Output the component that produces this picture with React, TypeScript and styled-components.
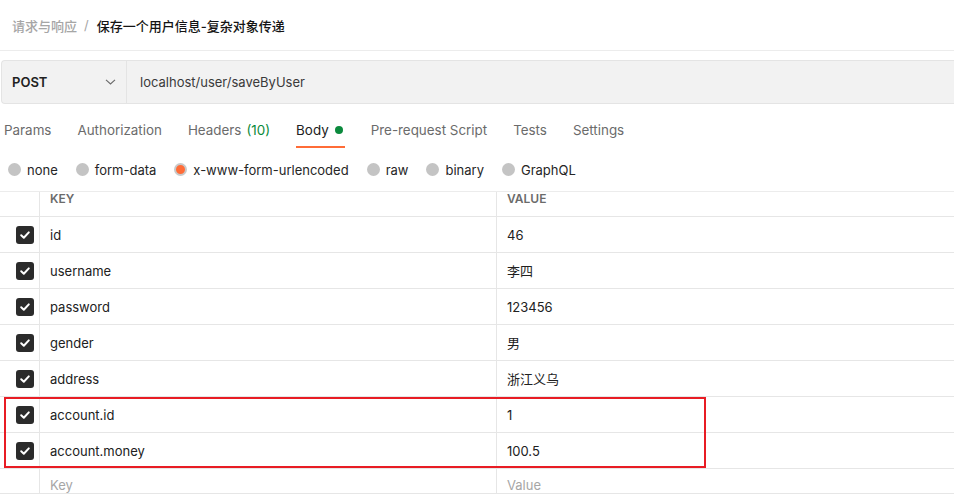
import styled, { createGlobalStyle } from 'styled-components';

type Param = {
  key: string;
  value: string;
  marked?: boolean;
};

const params: Param[] = [
  { key: 'id', value: '46' },
  { key: 'username', value: '李四' },
  { key: 'password', value: '123456' },
  { key: 'gender', value: '男' },
  { key: 'address', value: '浙江义乌' },
  { key: 'account.id', value: '1', marked: true },
  { key: 'account.money', value: '100.5', marked: true },
];

const tabs = [
  { label: 'Params' },
  { label: 'Authorization' },
  { label: 'Headers', count: '(10)' },
  { label: 'Body', active: true, dot: true },
  { label: 'Pre-request Script' },
  { label: 'Tests' },
  { label: 'Settings' },
];

const bodyTypes = ['none', 'form-data', 'x-www-form-urlencoded', 'raw', 'binary', 'GraphQL'];

function CheckIcon() {
  return (
    <svg width="12" height="12" viewBox="0 0 12 12" fill="none">
      <path d="M2.2 6.3 L4.8 8.8 L9.8 3.4" stroke="#fff" strokeWidth="2" strokeLinecap="round" strokeLinejoin="round" />
    </svg>
  );
}

function App() {
  const plain = params.filter((p) => !p.marked);
  const marked = params.filter((p) => p.marked);

  return (
    <Page>
      <GlobalStyle />
      <Breadcrumb>
        <Crumb>请求与响应</Crumb>
        <Slash>/</Slash>
        <Current>保存一个用户信息-复杂对象传递</Current>
      </Breadcrumb>

      <UrlBar>
        <Method>
          <span>POST</span>
          <svg width="11" height="6" viewBox="0 0 11 6" fill="none">
            <path d="M1 0.8 L5.5 5 L10 0.8" stroke="#6b6b6b" strokeWidth="1.1" />
          </svg>
        </Method>
        <Url>localhost/user/saveByUser</Url>
      </UrlBar>

      <Tabs>
        {tabs.map((t) => (
          <Tab key={t.label} $active={!!t.active}>
            {t.label}
            {t.count && <Count>{t.count}</Count>}
            {t.dot && <Dot />}
          </Tab>
        ))}
      </Tabs>

      <Radios>
        {bodyTypes.map((b) => (
          <RadioItem key={b}>
            <Radio $on={b === 'x-www-form-urlencoded'} />
            {b}
          </RadioItem>
        ))}
      </Radios>

      <Table>
        <HeadRow>
          <CheckCell />
          <HeadCell>KEY</HeadCell>
          <HeadCell>VALUE</HeadCell>
        </HeadRow>
        {plain.map((p) => (
          <Row key={p.key}>
            <CheckCell>
              <Box>
                <CheckIcon />
              </Box>
            </CheckCell>
            <Cell>{p.key}</Cell>
            <Cell>{p.value}</Cell>
          </Row>
        ))}
        <Marked>
          {marked.map((p) => (
            <Row key={p.key}>
              <CheckCell>
                <Box>
                  <CheckIcon />
                </Box>
              </CheckCell>
              <Cell>{p.key}</Cell>
              <Cell>{p.value}</Cell>
            </Row>
          ))}
          <Highlight />
        </Marked>
        <EmptyRow>
          <CheckCell />
          <Placeholder>Key</Placeholder>
          <Placeholder>Value</Placeholder>
        </EmptyRow>
      </Table>
    </Page>
  );
}

const GlobalStyle = createGlobalStyle`
  html, body {
    margin: 0;
    padding: 0;
    background: #fff;
    overflow: hidden;
  }
  body {
    font-family: Inter, "Noto Sans CJK SC", sans-serif;
    color: #212121;
    font-size: 13px;
  }
`;

const Page = styled.div`
  width: 954px;
  height: 499px;
  overflow: hidden;
`;

const Breadcrumb = styled.div`
  height: 51px;
  display: flex;
  align-items: center;
  padding-left: 12px;
  border-bottom: 1px solid #ececec;
  font-size: 13px;
  box-sizing: border-box;
`;

const Crumb = styled.span`
  color: #a6a6a6;
  font-weight: 500;
`;

const Slash = styled.span`
  color: #a6a6a6;
  margin: 0 8px 0 7px;
`;

const Current = styled.span`
  color: #141414;
  font-weight: 500;
`;

const UrlBar = styled.div`
  display: flex;
  height: 44px;
  margin: 9px 0 0 1px;
  border: 1px solid #e4e4e4;
  border-right: none;
  border-radius: 4px 0 0 4px;
  background: #f2f2f2;
  box-sizing: border-box;
`;

const Method = styled.div`
  width: 125px;
  display: flex;
  align-items: center;
  justify-content: space-between;
  padding: 0 10px 0 10px;
  box-sizing: border-box;
  border-right: 1px solid #e4e4e4;
  font-weight: 600;
  font-size: 13px;
  color: #212121;
`;

const Url = styled.div`
  display: flex;
  align-items: center;
  padding-left: 13px;
  color: #3a3a3a;
  font-size: 13px;
`;

const Tabs = styled.div`
  display: flex;
  gap: 26px;
  padding-left: 4px;
  height: 44px;
`;

const Tab = styled.div<{ $active: boolean }>`
  display: flex;
  align-items: center;
  gap: 6px;
  height: 44px;
  box-sizing: border-box;
  padding-top: 10px;
  color: ${(p) => (p.$active ? '#212121' : '#6b6b6b')};
  border-bottom: 2px solid ${(p) => (p.$active ? '#ff6c37' : 'transparent')};
  font-size: 13.4px;
`;

const Count = styled.span`
  color: #0a8a3a;
  margin-left: -1px;
`;

const Dot = styled.span`
  width: 8px;
  height: 8px;
  border-radius: 50%;
  background: #0b8a3d;
  margin-right: 2px;
`;

const Radios = styled.div`
  display: flex;
  align-items: center;
  gap: 18px;
  padding-left: 8px;
  height: 43px;
`;

const RadioItem = styled.label`
  display: flex;
  align-items: center;
  gap: 6px;
  font-size: 13px;
  color: #262626;
`;

const Radio = styled.span<{ $on: boolean }>`
  width: 13px;
  height: 13px;
  border-radius: 50%;
  box-sizing: border-box;
  background: ${(p) => (p.$on ? '#ff6c37' : '#c4c4c4')};
  border: ${(p) => (p.$on ? '2px solid #c9c9c9' : 'none')};
`;

const Table = styled.div`
  border-top: 1px solid #ececec;
  width: 1100px;
`;

const Row = styled.div`
  display: grid;
  grid-template-columns: 40px 457px 1fr;
  height: 36px;
  border-bottom: 1px solid #e6e6e6;
  box-sizing: border-box;
`;

const HeadRow = styled(Row)`
  height: 25px;
`;

const EmptyRow = styled(Row)`
  height: 25px;
`;

const CheckCell = styled.div`
  display: flex;
  align-items: center;
  padding-left: 16px;
  border-right: 1px solid #e6e6e6;
`;

const Cell = styled.div`
  display: flex;
  align-items: center;
  padding-left: 10px;
  border-right: 1px solid #e6e6e6;
  font-size: 13px;
  color: #212121;
  &:last-child {
    border-right: none;
  }
`;

const HeadCell = styled(Cell)`
  align-items: flex-start;
  padding-top: 0;
  font-size: 12px;
  font-weight: 600;
  color: #6b6b6b;
  line-height: 14px;
`;

const Placeholder = styled(Cell)`
  align-items: flex-end;
  color: #a6a6a6;
  line-height: 15px;
`;

const Box = styled.span`
  width: 18px;
  height: 18px;
  border-radius: 3px;
  background: #2b2b2b;
  display: flex;
  align-items: center;
  justify-content: center;
`;

const Marked = styled.div`
  position: relative;
`;

const Highlight = styled.div`
  position: absolute;
  left: 4px;
  top: 0;
  width: 702px;
  height: 71px;
  border: 2px solid #e81c24;
  box-sizing: border-box;
  pointer-events: none;
`;

export default App;
